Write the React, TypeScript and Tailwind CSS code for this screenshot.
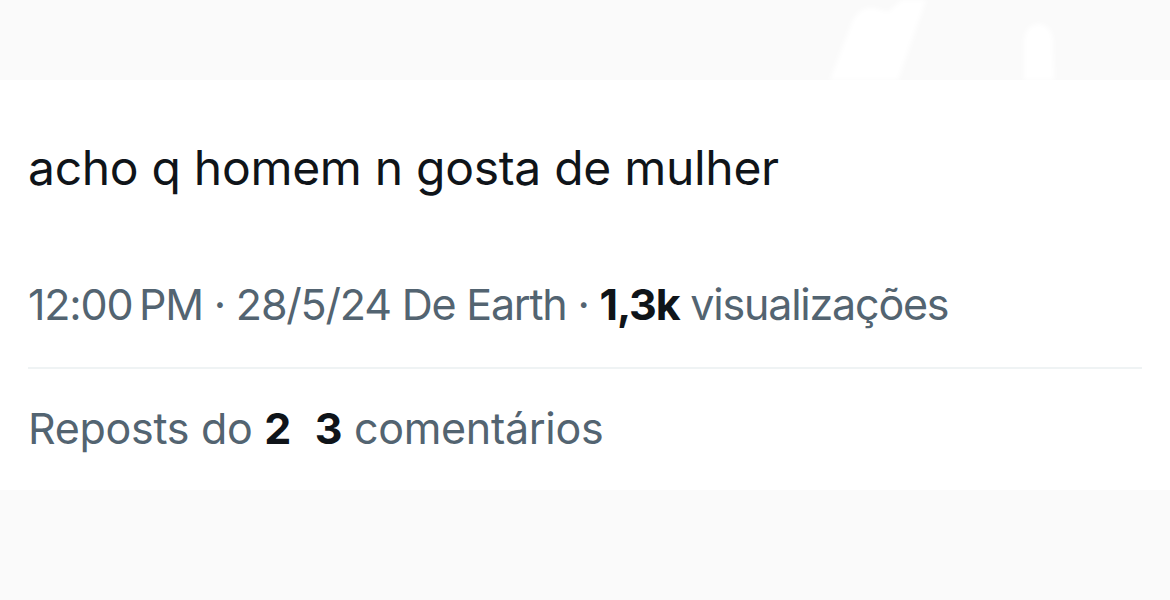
export default function App() {
  return (
    <div className="w-[1170px] h-[600px] bg-white flex flex-col overflow-hidden" style={{ fontFamily: 'Inter, "Liberation Sans", sans-serif' }}>
      <div className="relative h-[80px] bg-[#fafafa] shrink-0">
        <svg className="absolute left-0 top-0" width="1170" height="80" viewBox="0 0 1170 80">
          <defs>
            <filter id="b" x="-20%" y="-20%" width="140%" height="140%">
              <feGaussianBlur stdDeviation="2" />
            </filter>
          </defs>
          <path d="M830 80 L852 22 Q860 6 874 8 L888 12 L902 0 L926 0 L898 80 Z" fill="#ffffff" filter="url(#b)" />
          <path d="M1024 80 L1024 40 Q1026 24 1040 24 Q1052 26 1053 42 L1054 80 Z" fill="#ffffff" filter="url(#b)" />
        </svg>
      </div>
      <div className="flex flex-col px-[28px] h-[410px] shrink-0">
        <p className="mt-[56px] text-[48px] leading-[64px] text-[#0f1419] tracking-[-0.3px]">acho q homem n gosta de mulher</p>
        <p className="mt-[76px] text-[43px] leading-[56px] text-[#536471] tracking-[-1.2px]">
          12:00{'\u2009'}PM · 28/5/24 De Earth · <span className="font-bold text-[#0f1419]">1,3k</span> visualizações
        </p>
        <div className="mt-[35px] h-[2px] bg-[#eff3f4] w-[1114px]" />
        <p className="mt-[31px] text-[43px] leading-[56px] text-[#536471] tracking-[-0.3px]">
          Reposts do <span className="font-bold text-[#0f1419]">2</span>&nbsp;&nbsp;<span className="font-bold text-[#0f1419]">3</span> comentários
        </p>
      </div>
      <div className="flex-1 bg-[#fafafa]" />
    </div>
  );
}
